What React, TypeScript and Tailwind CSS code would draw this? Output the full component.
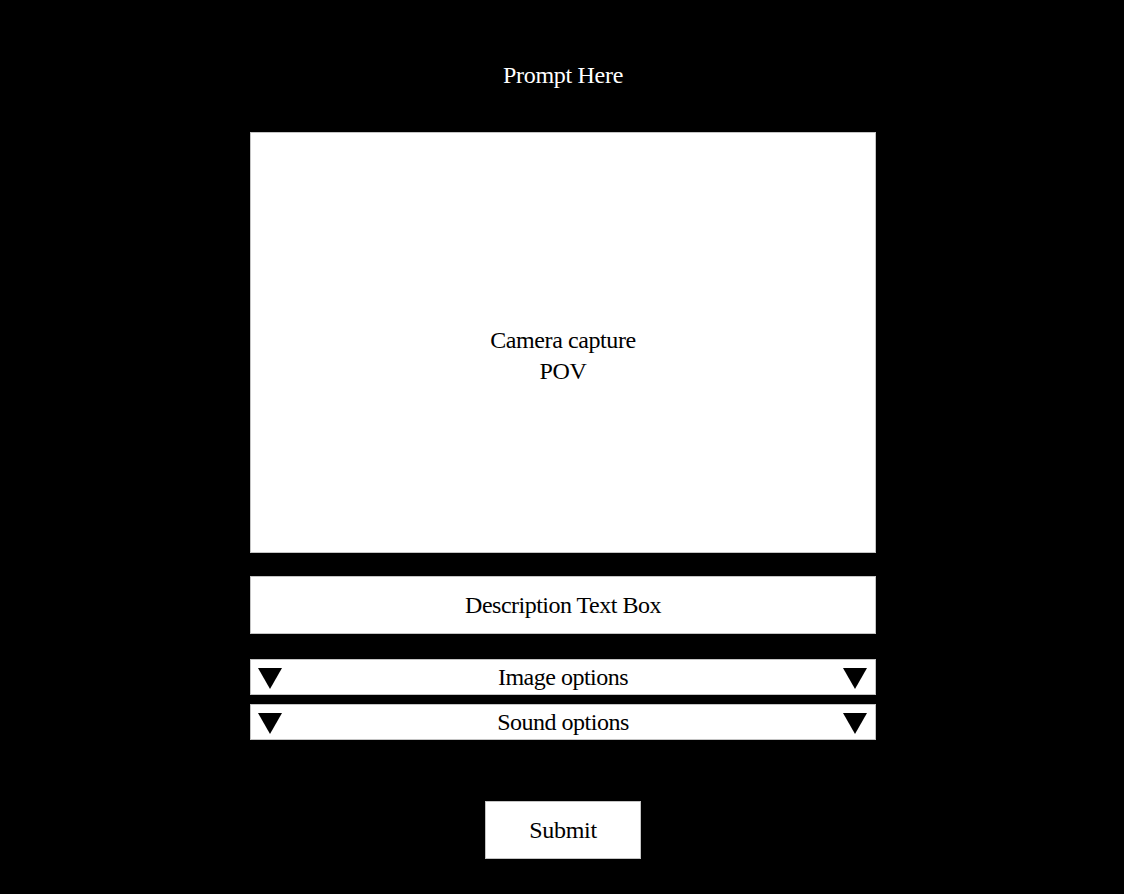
import React from 'react';

const Triangle: React.FC = () => (
  <svg width="24" height="21" viewBox="0 0 24 21" className="shrink-0">
    <polygon points="0,0 24,0 12,21" fill="#000" />
  </svg>
);

const OptionRow: React.FC<{ label: string; className?: string }> = ({ label, className }) => (
  <div className={`relative w-[626px] h-[36px] bg-white border border-[#c4c4c4] flex items-center justify-center ${className ?? ''}`}>
    <div className="absolute left-[7px] top-[8px]">
      <Triangle />
    </div>
    <span className="text-[24px] leading-[30px] tracking-[-0.5px] text-black">{label}</span>
    <div className="absolute right-[8px] top-[8px]">
      <Triangle />
    </div>
  </div>
);

const App: React.FC = () => {
  return (
    <div
      className="min-h-screen bg-black flex flex-col items-center pt-[60px] pl-[2px]"
      style={{ fontFamily: '"Liberation Serif", "DejaVu Serif", serif' }}
    >
      <h1 className="text-[24px] leading-[30px] text-white tracking-[-0.3px]">Prompt Here</h1>

      {/* camera preview */}
      <div className="mt-[42px] w-[626px] h-[421px] bg-white border border-[#c4c4c4] flex flex-col items-center justify-center pt-[26px]">
        <span className="text-[24px] leading-[31px] tracking-[-0.4px] text-black">Camera capture</span>
        <span className="text-[24px] leading-[31px] tracking-[-0.4px] text-black">POV</span>
      </div>

      <div className="mt-[23px] w-[626px] h-[58px] bg-white border border-[#c4c4c4] flex items-center justify-center">
        <span className="text-[24px] leading-[30px] tracking-[-0.5px] text-black">Description Text Box</span>
      </div>

      <OptionRow label="Image options" className="mt-[25px]" />
      <OptionRow label="Sound options" className="mt-[9px]" />

      <button className="mt-[61px] w-[156px] h-[58px] bg-white border border-[#c4c4c4] text-[24px] leading-[30px] tracking-[-0.3px] text-black">
        Submit
      </button>
    </div>
  );
};

export default App;
